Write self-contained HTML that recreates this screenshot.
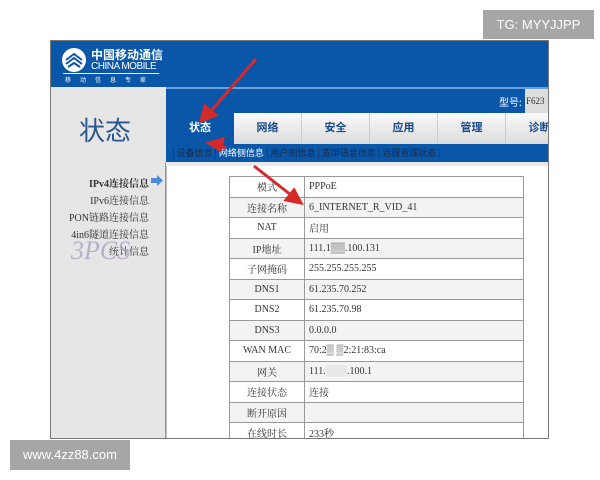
<!DOCTYPE html>
<html><head><meta charset="utf-8"><style>
*{margin:0;padding:0;box-sizing:border-box}
body{width:600px;height:480px;background:#fff;position:relative;overflow:hidden;font-family:"Liberation Serif","Noto Serif CJK SC",serif}
.a{position:absolute}
.frame{left:50px;top:40px;width:499px;height:399px;border:1px solid #777;background:#e8e8e8;overflow:hidden}
.hdr{left:0;top:0;width:499px;height:46px;background:#0a56a8}
.tab{top:72px;height:31px;width:68px;text-align:center;line-height:31px;font-size:11px;font-weight:bold;color:#1a4a8a;background:linear-gradient(#fbfbfb,#dcdcdc);border-right:1px solid #ccc;font-family:"Liberation Sans","Noto Sans CJK SC",sans-serif}
table{border-collapse:collapse;font-size:10px;color:#333}
td{border:1px solid #999;height:20.5px;padding:0 4px}
td.l{text-align:center;width:75px}
tr:nth-child(even) td{background:#f3f3f3}
.nav{right:0;text-align:right;font-size:10px;color:#333;width:100px}
</style></head><body>
<div class="a" style="left:483px;top:10px;width:111px;height:29px;background:#a6a6a6;color:#fff;font:13px 'Liberation Sans',sans-serif;line-height:29px;text-align:center">TG: MYYJJPP</div>
<div class="a frame">
 <div class="a hdr">
  <svg class="a" style="left:10px;top:6px" width="26" height="26" viewBox="0 0 26 26"><circle cx="13" cy="13" r="12" fill="#fff"/><path d="M5 13l8-6 8 6M5 17l8-6 8 6M7 20l6-4 6 4" stroke="#0a56a8" stroke-width="2" fill="none"/></svg>
  <div class="a" style="left:40px;top:5px;color:#fff;font:bold 12px 'Noto Sans CJK SC',sans-serif">中国移动通信</div>
  <div class="a" style="left:40px;top:20px;color:#fff;font:10px 'Liberation Sans',sans-serif;letter-spacing:-0.5px">CHINA MOBILE</div>
  <div class="a" style="left:12px;top:32px;width:96px;height:1px;background:#fff"></div>
  <div class="a" style="left:14px;top:34px;color:#fff;font:6px 'Noto Sans CJK SC',sans-serif;letter-spacing:9px">移动信息专家</div>
 </div>
 <div class="a" style="left:115px;top:46px;width:390px;height:2px;background:#6aa0d8"></div>
 <div class="a" style="left:115px;top:48px;width:384px;height:24px;background:#0a56a8"></div>
 <div class="a" style="left:448px;top:53px;color:#fff;font:10px 'Noto Sans CJK SC',sans-serif">型号:</div>
 <div class="a" style="left:474px;top:48px;width:25px;height:24px;background:#ddd;font-size:9px;line-height:24px;padding-left:1px;color:#333">F623</div>
 <div class="a" style="left:0;top:46px;width:115px;height:354px;background:#e6e6e6"></div>
 <div class="a" style="left:28px;top:70px;font:26px 'Noto Sans CJK SC',sans-serif;color:#2a5590">状态</div>
 <div class="a tab" style="left:115px;background:#0a56a8;color:#fff;border:none;width:68px">状态</div>
 <div class="a tab" style="left:183px">网络</div>
 <div class="a tab" style="left:251px">安全</div>
 <div class="a tab" style="left:319px">应用</div>
 <div class="a tab" style="left:387px">管理</div>
 <div class="a tab" style="left:455px">诊断</div>
 <div class="a" style="left:115px;top:103px;width:390px;height:18px;background:#0a56a8;color:#1a2a4a;font:9px 'Noto Sans CJK SC',sans-serif;line-height:18px;padding-left:6px;white-space:nowrap">| 设备信息 | <span style="color:#fff">网络侧信息</span> | 用户侧信息 | 宽带语音信息 | 远程管理状态 |</div>
 <div class="a" style="left:114px;top:121px;width:1px;height:280px;background:#999"></div>
 <div class="a" style="left:115px;top:125px;width:384px;height:280px;background:#fff;border-left:1px solid #bbb"></div>
 <div class="a nav" style="left:-2px;top:134px;font-weight:bold">IPv4连接信息</div>
 <svg class="a" style="left:100px;top:134px" width="12" height="11"><path d="M0 3h6V0l6 5.5-6 5.5V8H0z" fill="#4a8ad8"/></svg>
 <div class="a nav" style="left:-2px;top:151px">IPv6连接信息</div>
 <div class="a nav" style="left:-2px;top:168px">PON链路连接信息</div>
 <div class="a nav" style="left:-2px;top:185px">4in6隧道连接信息</div>
 <div class="a nav" style="left:-2px;top:202px">统计信息</div>
 <div class="a" style="left:20px;top:195px;font:italic 26px 'Liberation Serif',serif;color:#a898c0;opacity:.7">3PCS</div>
 <table class="a" style="left:178px;top:135px;width:295px">
  <tr><td class="l">模式</td><td>PPPoE</td></tr>
  <tr><td class="l">连接名称</td><td>6_INTERNET_R_VID_41</td></tr>
  <tr><td class="l">NAT</td><td>启用</td></tr>
  <tr><td class="l">IP地址</td><td>111.1▒▒.100.131</td></tr>
  <tr><td class="l">子网掩码</td><td>255.255.255.255</td></tr>
  <tr><td class="l">DNS1</td><td>61.235.70.252</td></tr>
  <tr><td class="l">DNS2</td><td>61.235.70.98</td></tr>
  <tr><td class="l">DNS3</td><td>0.0.0.0</td></tr>
  <tr><td class="l">WAN MAC</td><td>70:2▒ ▒2:21:83:ca</td></tr>
  <tr><td class="l">网关</td><td>111.<span style="color:#ccc">▒▒▒</span>.100.1</td></tr>
  <tr><td class="l">连接状态</td><td>连接</td></tr>
  <tr><td class="l">断开原因</td><td></td></tr>
  <tr><td class="l">在线时长</td><td>233秒</td></tr>
 </table>
 <svg class="a" style="left:0;top:0" width="505" height="400"><g stroke="#d42a2a" stroke-width="3" fill="#d42a2a"><line x1="205" y1="18" x2="160" y2="70"/><path d="M150 80l4-15 11 9z"/><line x1="175" y1="107" x2="164" y2="104"/><path d="M158 102l14-4-3 11z"/><line x1="203" y1="125" x2="240" y2="154"/><path d="M250 162l-15-3 8-10z"/></g></svg>
</div>
<div class="a" style="left:10px;top:440px;width:120px;height:30px;background:#a6a6a6;color:#fff;font:13px 'Liberation Sans',sans-serif;line-height:30px;text-align:center">www.4zz88.com</div>
</body></html>
